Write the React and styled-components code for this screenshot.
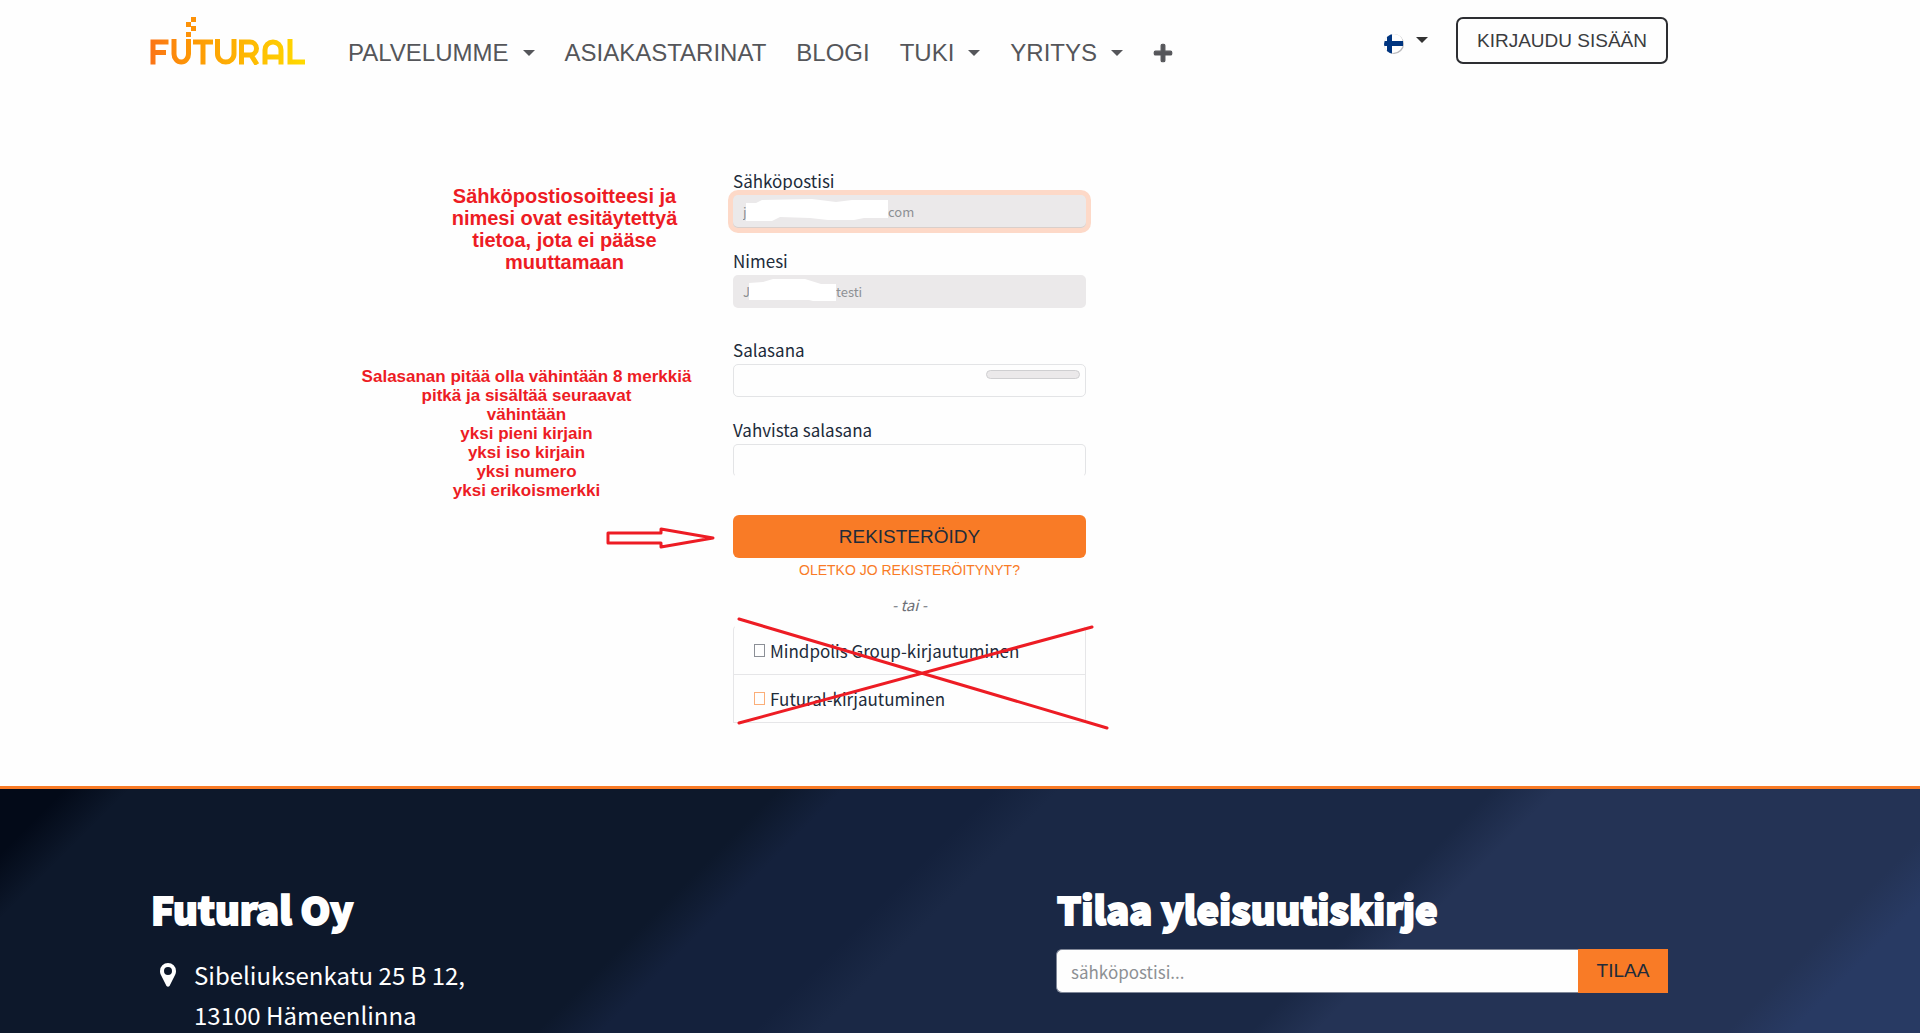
import React from "react";
import styled, { createGlobalStyle } from "styled-components";
import { FaPlus } from "react-icons/fa";

const body = `"Noto Sans CJK SC", "Noto Sans", sans-serif`;
const caps = `"Liberation Sans", Arial, sans-serif`;
const red = "#ed1c24";

const Global = createGlobalStyle`
  * { box-sizing: border-box; }
  body { margin: 0; background: #fefefe; color: #212b3a; font-family: ${body}; }
  a { color: inherit; text-decoration: none; }
  button, input { font: inherit; }
`;

const Page = styled.div`
  min-height: 100vh;
  display: flex;
  flex-direction: column;
`;

const Header = styled.header`
  display: flex;
  align-items: flex-start;
  padding: 17px 252px 0 150px;
`;

const Logo = styled.a`
  display: block;
  margin-right: 43px;
  svg { display: block; }
`;

const Nav = styled.nav`
  display: flex;
  align-items: center;
  gap: 30px;
  padding-top: 22px;
  color: #55565a;
  font: 24px/28px ${caps};
`;

const NavButton = styled.button`
  display: flex;
  align-items: center;
  gap: 14px;
  padding: 0;
  border: 0;
  background: none;
  color: inherit;
`;

const Caret = styled.span`
  border: 6px solid transparent;
  border-top-color: currentColor;
  border-bottom: 0;
`;

const Account = styled.div`
  display: flex;
  align-items: center;
  gap: 28px;
  margin-left: auto;
`;

const Language = styled(NavButton)`
  gap: 12px;
  color: #333;
  padding-bottom: 2px;
  svg { margin-top: 8px; }
`;

const Login = styled.a`
  padding: 0 19px;
  border: 2px solid #2d2e32;
  border-radius: 7px;
  color: #3b3c40;
  font: 19px/43px ${caps};
`;

const Main = styled.main`
  display: grid;
  grid-template-columns: 400px 353px;
  column-gap: 20px;
  padding: 101px 0 63px 313px;
`;

const Notes = styled.aside`
  display: flex;
  flex-direction: column;
  align-items: center;
  color: ${red};
  font-family: ${caps};
  font-weight: bold;
  text-align: center;
`;

const Note = styled.p`
  margin: 0;
  white-space: pre-line;
  font-size: ${(p) => (p.$large ? 20 : 17)}px;
  line-height: ${(p) => (p.$large ? 22 : 19)}px;
  padding-left: ${(p) => (p.$large ? 103 : 27)}px;
  padding-top: ${(p) => (p.$large ? 17 : 94)}px;
`;

const Arrow = styled.svg`
  align-self: flex-end;
  margin-top: 27px;
  overflow: visible;
`;

const Form = styled.form`
  display: flex;
  flex-direction: column;
`;

const Field = styled.div`
  display: flex;
  flex-direction: column;
  gap: 2px;
  position: relative;
  margin-bottom: ${(p) => (p.$wide ? 29 : 20)}px;
`;

const Label = styled.label`
  padding-top: 1px;
  font-size: 17px;
  line-height: 24px;
`;

const Input = styled.input`
  width: 100%;
  height: 33px;
  padding: 0 10px;
  border: 1px solid #e3e4e6;
  border-bottom-color: ${(p) => (p.$open ? "transparent" : "#e3e4e6")};
  border-radius: 5px;
  outline: 0;
  background: #fefefe;
  font-size: 13px;
`;

const Filled = styled.div`
  display: flex;
  align-items: center;
  height: 33px;
  padding-bottom: 1px;
  border-radius: 5px;
  background: #ebe9ea;
  color: #8d9094;
  box-shadow: ${(p) => (p.$focus ? "0 0 0 5px #fdd9c8, inset 0 -1px 0 #d9cfcb" : "none")};
`;

const FilledInput = styled.input`
  width: ${(p) => p.$width}px;
  padding: 0 0 0 ${(p) => p.$pad || 0}px;
  border: 0;
  outline: 0;
  background: none;
  color: inherit;
  font-size: 13px;
`;

const Strength = styled.meter`
  position: absolute;
  right: 6px;
  top: 33px;
  width: 94px;
  height: 9px;
  appearance: none;
  border: 1px solid #cfcfd1;
  border-radius: 5px;
  background: #ebe9ea;
  &::-webkit-meter-inner-element { display: none; }
`;

const Submit = styled.button`
  height: 43px;
  margin-top: 18px;
  padding: 0;
  border: 0;
  border-radius: 6px;
  background: #f97b26;
  color: #212b3a;
  font: 19px/42px ${caps};
`;

const Already = styled.a`
  align-self: center;
  margin-top: 4px;
  color: #f97b26;
  font: 14px/16px ${caps};
`;

const Or = styled.em`
  align-self: center;
  margin: 15px 0 9px;
  color: #6c7077;
  font-size: 15px;
  line-height: 23px;
`;

const Providers = styled.div`
  position: relative;
  border: 1px solid #e6e6e8;
  border-top-color: transparent;
  border-radius: 5px 5px 0 0;
`;

const Provider = styled.a`
  display: flex;
  align-items: center;
  gap: 5px;
  height: 48px;
  padding-left: 20px;
  font-size: 17px;
  & + & { border-top: 1px solid #e6e6e8; }
`;

const Glyph = styled.span`
  width: 11px;
  height: 13px;
  border: 1px solid ${(p) => p.$color};
`;

const Cross = styled.svg`
  position: absolute;
  left: 0;
  top: -12px;
  overflow: visible;
  pointer-events: none;
`;

const Footer = styled.footer`
  flex: 1 0 0;
  height: 0;
  overflow: hidden;
  display: grid;
  grid-template-columns: 1fr 612px;
  padding: 90px 252px 0 150px;
  border-top: 3px solid #f97b26;
  color: #fff;
  background: linear-gradient(
    135deg,
    #030a18 3%, #0d182b 6%,
    #0d182b 36%, #14213c 39%,
    #14213c 46%, #1a2845 49%,
    #1a2845 69%, #243355 72%,
    #243355 91%, #283a63 94%
  );
`;

const Title = styled.h2`
  margin: 0 0 10px;
  padding-left: 1px;
  font: 900 38px/60px ${body};
  -webkit-text-stroke: 2px #fff;
`;

const Address = styled.address`
  display: flex;
  gap: 18px;
  padding: 6px 0 0 10px;
  font-size: 24px;
  line-height: 40px;
  font-style: normal;
  svg { margin-top: 8px; }
`;

const Signup = styled.form`
  display: flex;
`;

const SignupInput = styled.input`
  flex: 1;
  height: 44px;
  padding: 0 14px;
  border: 1px solid #7f8798;
  border-right: 0;
  border-radius: 6px 0 0 6px;
  outline: 0;
  background: #fefefe;
  font-size: 17px;
  &::placeholder { color: #8d9094; opacity: 1; }
`;

const SignupButton = styled.button`
  width: 90px;
  height: 44px;
  padding: 0;
  border: 0;
  background: #f97b26;
  color: #212b3a;
  font: 19px/44px ${caps};
`;

const Mask = ({ d, width }) => (
  <svg width={width} height="24" viewBox={`0 0 ${width} 24`} aria-hidden="true">
    <path d={d} fill="#fff" />
  </svg>
);

const menu = [
  { text: "PALVELUMME", caret: true },
  { text: "ASIAKASTARINAT" },
  { text: "BLOGI" },
  { text: "TUKI", caret: true },
  { text: "YRITYS", caret: true },
];

export default function App() {
  return (
    <Page>
      <Global />
      <Header>
        <Logo href="#" aria-label="Futural">
          <svg width="155" height="48" viewBox="0 0 155 48">
            <defs>
              <linearGradient id="sun" gradientUnits="userSpaceOnUse" x1="0" x2="155" y1="0" y2="0">
                <stop offset="0" stopColor="#fb7417" />
                <stop offset=".25" stopColor="#fd9606" />
                <stop offset="1" stopColor="#ffda00" />
              </linearGradient>
            </defs>
            <g fill="none" stroke="url(#sun)" strokeWidth="5">
              <path d="M3 47.500V25H18.500M3 35.500H16" />
              <path d="M24 22V37a7.200 8 0 0 0 14.500 0V22" />
              <path d="M43 25H63M53 25V47.500" />
              <path d="M67.500 22V37a8.200 8 0 0 0 16.500 0V22" />
              <path d="M91.500 47.500V25H100a6.500 6.500 0 0 1 0 13H91.500M101 38L107 47.500" />
              <path d="M115 47.500V33a8 8 0 0 1 16 0V47.500M115 40H131" />
              <path d="M140 22V45H155" />
            </g>
            <g fill="#fd9208">
              <rect x="41" y="0" width="5" height="5" />
              <rect x="36" y="5" width="5" height="5" />
              <rect x="41" y="9" width="5" height="5" />
              <rect x="36" y="15" width="5" height="5" />
            </g>
          </svg>
        </Logo>
        <Nav>
          {menu.map((m) =>
            m.caret ? (
              <NavButton key={m.text}>{m.text}<Caret /></NavButton>
            ) : (
              <a key={m.text} href="#">{m.text}</a>
            )
          )}
          <NavButton aria-label="Lisää"><FaPlus size={20} stroke="currentColor" strokeWidth="30" /></NavButton>
        </Nav>
        <Account>
          <Language aria-label="Suomi">
            <svg width="20" height="20" viewBox="0 0 20 20">
              <clipPath id="disc"><circle cx="10" cy="10" r="10" /></clipPath>
              <g clipPath="url(#disc)">
                <rect width="20" height="20" fill="#b9b9bc" />
                <circle cx="9" cy="9" r="10" fill="#fff" />
                <path d="M3 0h5v20h-5zM0 7h19v5H0z" fill="#003580" />
              </g>
            </svg>
            <Caret />
          </Language>
          <Login href="#">KIRJAUDU SISÄÄN</Login>
        </Account>
      </Header>

      <Main>
        <Notes>
          <Note $large>{"Sähköpostiosoitteesi ja\nnimesi ovat esitäytettyä\ntietoa, jota ei pääse\nmuuttamaan"}</Note>
          <Note>{"Salasanan pitää olla vähintään 8 merkkiä\npitkä ja sisältää seuraavat\nvähintään\nyksi pieni kirjain\nyksi iso kirjain\nyksi numero\nyksi erikoismerkki"}</Note>
          <Arrow width="108" height="22" viewBox="0 0 108 22">
            <path d="M3 6H56V2L108 11L56 20V16H3Z" fill="none" stroke={red} strokeWidth="3" strokeLinejoin="round" />
          </Arrow>
        </Notes>

        <Form onSubmit={(e) => e.preventDefault()}>
          <Field>
            <Label htmlFor="email">Sähköpostisi</Label>
            <Filled $focus>
              <FilledInput id="email" $width={13} $pad={10} readOnly value="j" />
              <Mask width={142} d="M0 4L10 4L16 1L66 0L90 3L106 1H142V19H118L108 21L82 21L64 19L34 18L26 22H0Z" />
              <FilledInput aria-label="Sähköpostin loppu" $width={60} readOnly value="com" />
            </Filled>
          </Field>
          <Field $wide>
            <Label htmlFor="name">Nimesi</Label>
            <Filled>
              <FilledInput id="name" $width={16} $pad={10} readOnly value="J" />
              <Mask width={87} d="M0 4L14 3L24 0H56L72 5H87V22H64L60 21H0Z" />
              <FilledInput aria-label="Nimen loppu" $width={60} readOnly value="testi" />
            </Filled>
          </Field>
          <Field>
            <Label htmlFor="password">Salasana</Label>
            <Input id="password" type="password" />
            <Strength aria-label="Salasanan vahvuus" value={0} />
          </Field>
          <Field>
            <Label htmlFor="confirm">Vahvista salasana</Label>
            <Input id="confirm" type="password" $open />
          </Field>
          <Submit>REKISTERÖIDY</Submit>
          <Already href="#">OLETKO JO REKISTERÖITYNYT?</Already>
          <Or>- tai -</Or>
          <Providers>
            <Provider href="#"><Glyph $color="#8b8f96" />Mindpolis Group-kirjautuminen</Provider>
            <Provider href="#"><Glyph $color="#fbae78" />Futural-kirjautuminen</Provider>
            <Cross width="375" height="120">
              <path d="M5 5L373 114M358 13L5 109" stroke={red} strokeWidth="3" strokeLinecap="round" />
            </Cross>
          </Providers>
        </Form>
      </Main>

      <Footer>
        <section>
          <Title>Futural Oy</Title>
          <Address>
            <svg width="16" height="24" viewBox="0 0 16 24">
              <path fill="#fff" fillRule="evenodd" d="M8 0a8 8 0 0 1 8 8c0 2-.5 3-1.200 4.500L9.500 23q-1.500 1.500-3 0L1.200 12.500C.5 11 0 10 0 8a8 8 0 0 1 8-8ZM8 4a4 4 0 1 0 0 8a4 4 0 0 0 0-8Z" />
            </svg>
            <span>Sibeliuksenkatu 25 B 12,<br />13100 Hämeenlinna</span>
          </Address>
        </section>
        <section>
          <Title>Tilaa yleisuutiskirje</Title>
          <Signup onSubmit={(e) => e.preventDefault()}>
            <SignupInput aria-label="Sähköposti" placeholder="sähköpostisi..." />
            <SignupButton>TILAA</SignupButton>
          </Signup>
        </section>
      </Footer>
    </Page>
  );
}
